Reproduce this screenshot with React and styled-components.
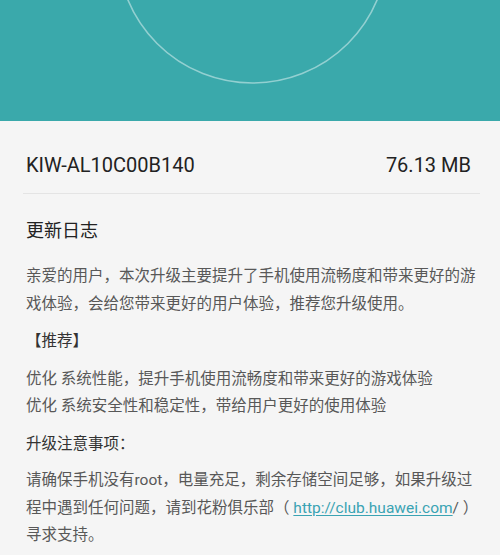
import React from 'react';
import styled, { createGlobalStyle } from 'styled-components';

const GlobalStyle = createGlobalStyle`
  html, body {
    margin: 0;
    padding: 0;
    background: #f5f5f5;
  }
  body {
    font-family: Roboto, "Noto Sans CJK SC", "Noto Sans", sans-serif;
  }
`;

const App = () => {
  return (
    <>
      <GlobalStyle />
      <Page>
        <Header>
          <Ring viewBox="0 0 500 121" preserveAspectRatio="none">
            <circle cx="252.5" cy="-52" r="135" fill="none" stroke="rgba(255,255,255,0.45)" strokeWidth="1.6" />
          </Ring>
        </Header>

        <VersionRow>
          <VersionName>KIW-AL10C00B140</VersionName>
          <VersionSize>76.13 MB</VersionSize>
        </VersionRow>
        <Divider />

        <Content>
          <SectionTitle>更新日志</SectionTitle>
          <Paragraph $gap={17.5} $lh={28}>
            亲爱的用户，本次升级主要提升了手机使用流畅度和带来更好的游
            <br />
            戏体验，会给您带来更好的用户体验，推荐您升级使用。
          </Paragraph>
          <Label $gap={9}>【推荐】</Label>
          <Paragraph $gap={10.5} $lh={27}>
            优化 系统性能，提升手机使用流畅度和带来更好的游戏体验
            <br />
            优化 系统安全性和稳定性，带给用户更好的使用体验
          </Paragraph>
          <Label $gap={10.5}>升级注意事项：</Label>
          <Paragraph $gap={9.25} $lh={27.5}>
            请确保手机没有root，电量充足，剩余存储空间足够，如果升级过
            <br />
            程中遇到任何问题，请到花粉俱乐部（ <StyledLink href="#">http://club.huawei.com</StyledLink>/ ）
            <br />
            寻求支持。
          </Paragraph>
        </Content>
      </Page>
    </>
  );
};

export default App;

const Page = styled.div`
  width: 500px;
  height: 555px;
  overflow: hidden;
  background: #f5f5f5;
`;

const Header = styled.div`
  position: relative;
  height: 121px;
  background: #3aa9ab;
  overflow: hidden;
`;

const Ring = styled.svg`
  display: block;
  width: 100%;
  height: 100%;
`;

const VersionRow = styled.div`
  display: flex;
  justify-content: space-between;
  align-items: center;
  padding: 32px 29px 16px 26px;
  line-height: 24px;
  font-size: 20px;
  color: #222;
`;

const VersionName = styled.span`
  letter-spacing: 0;
`;

const VersionSize = styled.span`
  letter-spacing: 0;
`;

const Divider = styled.div`
  height: 1px;
  margin: 0 20px 0 23px;
  background: #e4e4e4;
`;

const Content = styled.div`
  padding: 22.5px 24px 0 26px;
`;

const SectionTitle = styled.h2`
  margin: 0;
  font-size: 18px;
  font-weight: 400;
  line-height: 28px;
  color: #222;
`;

const Paragraph = styled.p`
  margin: ${({ $gap }) => $gap}px 0 0 0;
  font-size: 15.5px;
  line-height: ${({ $lh }) => $lh}px;
  color: #585858;
  white-space: nowrap;
`;

const Label = styled.p`
  margin: ${({ $gap }) => $gap}px 0 0 0;
  font-size: 15.5px;
  line-height: 28px;
  color: #333;
`;

const StyledLink = styled.a`
  color: #3aa3b3;
  text-decoration: underline;
  text-underline-offset: 2px;
`;
